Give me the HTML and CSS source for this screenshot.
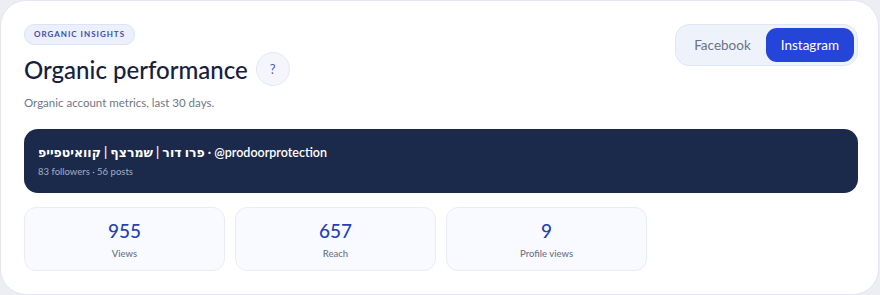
FILE: index.html
```html
<!DOCTYPE html>
<html lang="en">
<head>
	<meta charset="UTF-8">
	<title>Organic insights</title>
	<link rel="stylesheet" href="styles.css">
</head>
<body>
   <div class="card">
   	<div class="head">
   		<div class="intro">
   			<span class="badge">ORGANIC INSIGHTS</span>
   			<div class="titlerow">
   				<h1>Organic performance</h1>
   				<span class="help">?</span>
   			</div>
   			<p class="sub">Organic account metrics, last 30 days.</p>
   		</div>
   		<ul class="toggle">
   			<li>Facebook</li>
   			<li class="active">Instagram</li>
   		</ul>
   	</div>
   	<div class="account">
   		<div class="name">פרו דור | שמרצף | קוואיטפייפ · @prodoorprotection</div>
   		<div class="meta">83 followers · 56 posts</div>
   	</div>
   	<ul class="stats">
   		<li><b>955</b><span>Views</span></li>
   		<li><b>657</b><span>Reach</span></li>
   		<li><b>9</b><span>Profile views</span></li>
   	</ul>
   </div>
</body>
</html>
```

FILE: styles.css
```css
body,ul,li,h1,p{margin:0;padding:0;list-style:none;}
body{
	background:#eceef3;
	font-family:"Lato","DejaVu Sans",sans-serif;
	color:#17223f;
}
.card{
	width:834px;
	height:270px;
	background:#fff;
	border:1px solid #e3e6ee;
	border-radius:26px;
	padding:23px 20px 0 23px;
	overflow:hidden;
}
.head{
	display:flex;
	justify-content:space-between;
	align-items:flex-start;
}
.intro{
	display:flex;
	flex-direction:column;
	align-items:flex-start;
}
.badge{
	height:19px;
	line-height:19px;
	padding:0 9px;
	border:1px solid #dbe3f7;
	border-radius:10px;
	background:#ebf0fc;
	color:#3a4db0;
	font-size:8px;
	font-weight:700;
	letter-spacing:1px;
}
.titlerow{
	display:flex;
	align-items:center;
	gap:8px;
	margin-top:7px;
}
h1{
	font-size:24px;
	font-weight:500;
	color:#16213e;
}
.help{
	width:32px;
	height:32px;
	line-height:32px;
	text-align:center;
	border:1px solid #e4e8f3;
	border-radius:50%;
	background:#f4f6fc;
	color:#4c5fa6;
	font-size:13px;
}
.sub{
	margin-top:10px;
	font-size:11.5px;
	color:#6f7689;
}
.toggle{
	display:flex;
	padding:3px;
	border:1px solid #dfe6f6;
	border-radius:14px;
	background:#eef2fb;
}
.toggle li{
	height:34px;
	line-height:34px;
	padding:0 15px;
	font-size:13.5px;
	color:#6a7287;
	border-radius:11px;
}
.toggle .active{
	background:#2544d8;
	color:#fff;
}
.account{
	margin-top:20px;
	height:64px;
	padding:0 14px;
	border-radius:14px;
	background:#1b2a4b;
	display:flex;
	flex-direction:column;
	justify-content:center;
}
.account .name{
	color:#fff;
	font-size:12.5px;
	font-weight:600;
}
.account .meta{
	margin-top:6px;
	color:#a5aec3;
	font-size:9.5px;
}
.stats{
	display:grid;
	grid-template-columns:repeat(4,1fr);
	gap:10px;
	margin-top:14px;
}
.stats li{
	height:62px;
	border:1px solid #e7ecf6;
	border-radius:12px;
	background:#f8faff;
	display:flex;
	flex-direction:column;
	align-items:center;
	justify-content:center;
}
.stats b{
	font-size:19px;
	font-weight:500;
	color:#2640b5;
}
.stats span{
	margin-top:6px;
	font-size:9.5px;
	font-weight:500;
	color:#6b7285;
}
```
